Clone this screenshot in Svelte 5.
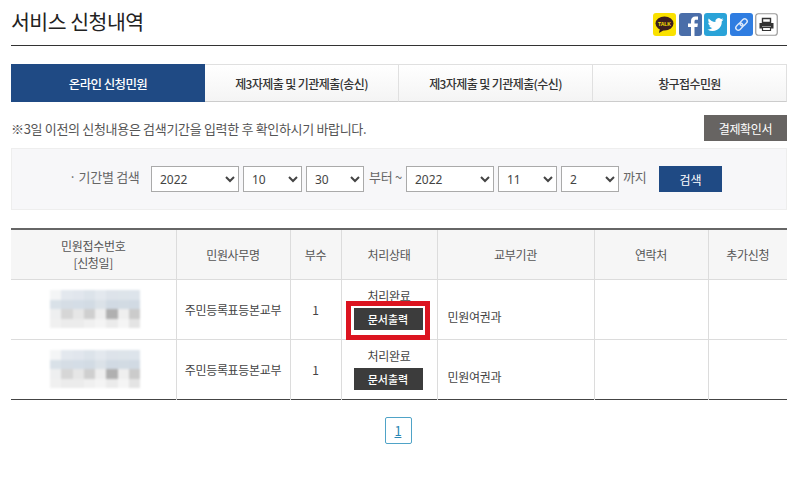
<script>
  const tabs = ['온라인 신청민원', '제3자제출 및 기관제출(송신)', '제3자제출 및 기관제출(수신)', '창구접수민원'];
  const heads = ['민원사무명', '부수', '처리상태', '교부기관', '연락처', '추가신청'];
  const blurA = [
    '#f4f5f6','#e3e8ee','#e1e6ed','#dce3ea','#e3e8ee','#dde3ea','#dde4ea','#dde4eb',
    '#d9e1e8','#d5dde5','#d4dde6','#d2dbe4','#dbe2e8','#d1dae3','#d2dbe3','#d1dae3',
    '#eeeff0','#d6d6d6','#e6e6e6','#cfcfcf','#eeeeee','#b0b0b0','#efefef','#cbcbcb',
    '#f0f0f0','#ececec','#ececec','#f0f0f0','#f4f4f4','#ebebeb','#f5f5f5','#e4e4e4'
  ];
  const rows = [blurA, blurA];
</script>

<div class="page">
  <header class="top">
    <h1>서비스 신청내역</h1>
    <div class="share">
      <svg class="ic" viewBox="0 0 23 23"><rect width="23" height="23" rx="3" fill="#fae100"/><ellipse cx="11.500" cy="10.500" rx="9" ry="7" fill="#3b1e1e"/><path d="M7 15l-1 5 5-3z" fill="#3b1e1e"/><text x="11.500" y="12.500" text-anchor="middle" class="talk">TALK</text></svg>
      <svg class="ic" viewBox="0 0 23 23"><rect width="23" height="23" rx="3" fill="#4a6ea9"/><path d="M12 23v-9H9v-3.500h3V8c0-3 1.800-4.500 4.400-4.500H19v3.300h-1.800c-1.300 0-1.700.6-1.700 1.600v2.100h3.400l-.5 3.500h-2.900v9z" fill="#fff"/></svg>
      <svg class="ic" viewBox="0 0 23 23"><rect width="23" height="23" rx="3" fill="#2aa3d8"/><path d="M19.500 6.500c-.6.300-1.200.4-1.900.5.700-.4 1.200-1 1.400-1.800-.6.400-1.300.6-2 .8a3.300 3.300 0 0 0-5.600 3C8.700 8.800 6.300 7.500 4.700 5.500c-.9 1.500-.4 3.400 1 4.400-.5 0-1-.2-1.500-.4 0 1.600 1.100 3 2.600 3.300-.5.100-1 .1-1.500 0 .4 1.300 1.600 2.200 3.100 2.300A6.600 6.600 0 0 1 3.500 16.500a9.300 9.300 0 0 0 14.300-8.300c.7-.4 1.200-1 1.700-1.700z" fill="#fff"/></svg>
      <svg class="ic" viewBox="0 0 23 23"><rect width="23" height="23" rx="3" fill="#2f7de1"/><g fill="none" stroke="#dbe8fa" stroke-width="1.400" transform="rotate(-45 11.500 11.500)"><rect x="4.500" y="9" width="8" height="5" rx="2.500"/><rect x="10.500" y="9" width="8" height="5" rx="2.500"/></g></svg>
      <svg class="ic" viewBox="0 0 23 23"><rect x=".75" y=".75" width="21.500" height="21.500" rx="2.500" fill="#fff" stroke="#999" stroke-width="1.200"/><path d="M7.500 5.500h8v4h-8z" fill="none" stroke="#333" stroke-width="1.400"/><path d="M4.500 10h14v5.500h-2.500v-2H7v2H4.500z" fill="#333"/><path d="M7.500 14.500h8v3h-8z" fill="none" stroke="#333" stroke-width="1.200"/></svg>
    </div>
  </header>

  <nav class="tabs">
    {#each tabs as t, i}
      <div class="tab" class:on={i === 0}>{t}</div>
    {/each}
  </nav>

  <div class="notice">
    <p>※3일 이전의 신청내용은 검색기간을 입력한 후 확인하시기 바랍니다.</p>
    <button class="receipt">결제확인서</button>
  </div>

  <section class="search">
    <span class="lbl">· 기간별 검색</span>
    <select class="y"><option>2022</option></select>
    <select class="m"><option>10</option></select>
    <select class="d"><option>30</option></select>
    <span class="from">부터 ~</span>
    <select class="y"><option>2022</option></select>
    <select class="m"><option>11</option></select>
    <select class="d"><option>2</option></select>
    <span class="to">까지</span>
    <button class="go">검색</button>
  </section>

  <table>
    <colgroup>
      <col class="c1" /><col class="c2" /><col class="c3" /><col class="c4" /><col class="c5" /><col class="c6" /><col class="c7" />
    </colgroup>
    <thead>
      <tr>
        <th>민원접수번호<br />[신청일]</th>
        {#each heads as h}<th>{h}</th>{/each}
      </tr>
    </thead>
    <tbody>
      {#each rows as cells, r}
        <tr>
          <td>
            <div class="mosaic">
              {#each cells as c}<i style="background:{c}"></i>{/each}
            </div>
          </td>
          <td>주민등록표등본교부</td>
          <td>1</td>
          <td class="state">
            <div class="done">처리완료</div>
            <div class="wrap" class:mark={r === 0}><button class="print">문서출력</button></div>
          </td>
          <td class="org">민원여권과</td>
          <td></td>
          <td></td>
        </tr>
      {/each}
    </tbody>
  </table>

  <div class="pager"><a href="#p1">1</a></div>
</div>

<style>
  :global(body) { margin: 0; background: #fff; }
  .page {
    width: 776px;
    margin-left: 11px;
    font-family: "Noto Sans CJK KR", "Noto Sans", sans-serif;
    font-size: 12px;
    color: #444;
    letter-spacing: -0.3px;
  }
  .top {
    height: 45px;
    border-bottom: 1px solid #333;
    display: flex;
    justify-content: space-between;
    align-items: flex-start;
  }
  h1 {
    margin: 5px 0 0;
    font-size: 20.500px;
    line-height: 32px;
    font-weight: 400;
    color: #222;
    letter-spacing: -0.5px;
  }
  .share { display: flex; gap: 2.500px; margin: 13px 9px 0 0; }
  .ic { width: 23px; height: 23px; display: block; }
  .talk { font: 700 5px "Liberation Sans", sans-serif; fill: #fae100; letter-spacing: 0; }

  .tabs {
    margin-top: 18px;
    display: grid;
    grid-template-columns: repeat(4, 194px);
    height: 38px;
  }
  .tab {
    display: flex;
    align-items: center;
    justify-content: center;
    font-size: 12px;
    font-weight: 500;
    color: #333;
    background: linear-gradient(#fff, #f4f4f4);
    border: 1px solid #e0e0e0;
    border-left: 0;
    border-bottom-color: #ccc;
    box-sizing: border-box;
    letter-spacing: -0.6px;
  }
  .tab.on {
    background: #1f4a84;
    color: #fff;
    border: 0;
    font-size: 12.500px;
  }

  .notice {
    margin-top: 13px;
    height: 26px;
    display: flex;
    justify-content: space-between;
    align-items: center;
  }
  .notice p { margin: 0; font-size: 13px; color: #555; letter-spacing: -0.32px; }
  .receipt {
    width: 83px;
    height: 26px;
    border: 0;
    padding: 0;
    background: #676462;
    color: #fff;
    font: inherit;
    letter-spacing: -0.3px;
  }

  .search {
    margin-top: 7px;
    height: 62px;
    box-sizing: border-box;
    background: #f7f7f9;
    border: 1px solid #eee;
    padding: 17px 0 0 57px;
    display: flex;
    align-items: flex-start;
  }
  .search span { font-size: 13px; color: #666; line-height: 22px; }
  .lbl { width: 82px; flex: none; white-space: nowrap; }
  .from { width: 37px; flex: none; margin: 0 0 0 5px; white-space: nowrap; }
  .to { width: 36px; flex: none; margin-left: 4px; }
  select {
    height: 26px;
    box-sizing: border-box;
    border: 1px solid #aaa;
    border-radius: 0;
    background-color: #fff;
    font-family: "Noto Sans", sans-serif;
    font-size: 12px;
    color: #444;
    padding: 0 0 0 4px;
    letter-spacing: 0;
    flex: none;
  }
  .y { width: 88px; }
  .m { width: 59px; margin-left: 4px; }
  .d { width: 58px; margin-left: 4px; }
  .go {
    width: 63px;
    height: 26px;
    border: 0;
    padding: 0;
    background: #1f4a84;
    color: #fff;
    font: inherit;
    font-size: 12px;
  }

  table {
    margin-top: 18px;
    width: 776px;
    table-layout: fixed;
    border-collapse: collapse;
    border-top: 2px solid #666;
    border-bottom: 1px solid #444;
  }
  .c1 { width: 165px; }
  .c2 { width: 114px; }
  .c3 { width: 51px; }
  .c4 { width: 96px; }
  .c5 { width: 157px; }
  .c6 { width: 114px; }
  .c7 { width: 79px; }
  th, td {
    box-sizing: border-box;
    border-left: 1px solid #dcdcdc;
    border-bottom: 1px solid #dcdcdc;
    padding: 0;
    text-align: center;
    font-weight: 400;
  }
  th:first-child, td:first-child { border-left: 0; }
  tbody tr:last-child td { border-bottom: 0; }
  th { height: 50px; background: #f6f6f6; color: #555; line-height: 17px; }
  td { height: 60px; color: #444; }
  .mosaic {
    width: 90px;
    height: 38px;
    margin: 0 auto 0 39px;
    display: grid;
    grid-template-columns: repeat(8, 1fr);
    grid-template-rows: repeat(4, 1fr);
    filter: blur(1px);
  }
  .mosaic i { display: block; }
  td.state { position: relative; vertical-align: top; }
  .done { line-height: 14px; margin-top: 9px; }
  .wrap { margin-top: 5px; height: 22px; position: relative; }
  .mark::after {
    content: "";
    position: absolute;
    left: 4px;
    top: -7px;
    width: 84px;
    height: 39px;
    box-sizing: border-box;
    border: 5px solid #dc1420;
  }
  .print {
    display: block;
    width: 69px;
    height: 22px;
    margin-left: 12px;
    border: 0;
    padding: 0;
    background: #3c3c3c;
    color: #fff;
    font: inherit;
    font-size: 11px;
    font-weight: 500;
  }
  td.org { text-align: left; padding: 15px 0 0 10px; }

  .pager { margin-top: 17px; display: flex; justify-content: center; padding-right: 2px; }
  .pager a {
    width: 27px;
    height: 27px;
    box-sizing: border-box;
    border: 1px solid #4fa3c7;
    border-radius: 2px;
    display: flex;
    align-items: center;
    justify-content: center;
    color: #2a86b4;
    font-size: 13px;
    text-decoration: underline;
  }
</style>
